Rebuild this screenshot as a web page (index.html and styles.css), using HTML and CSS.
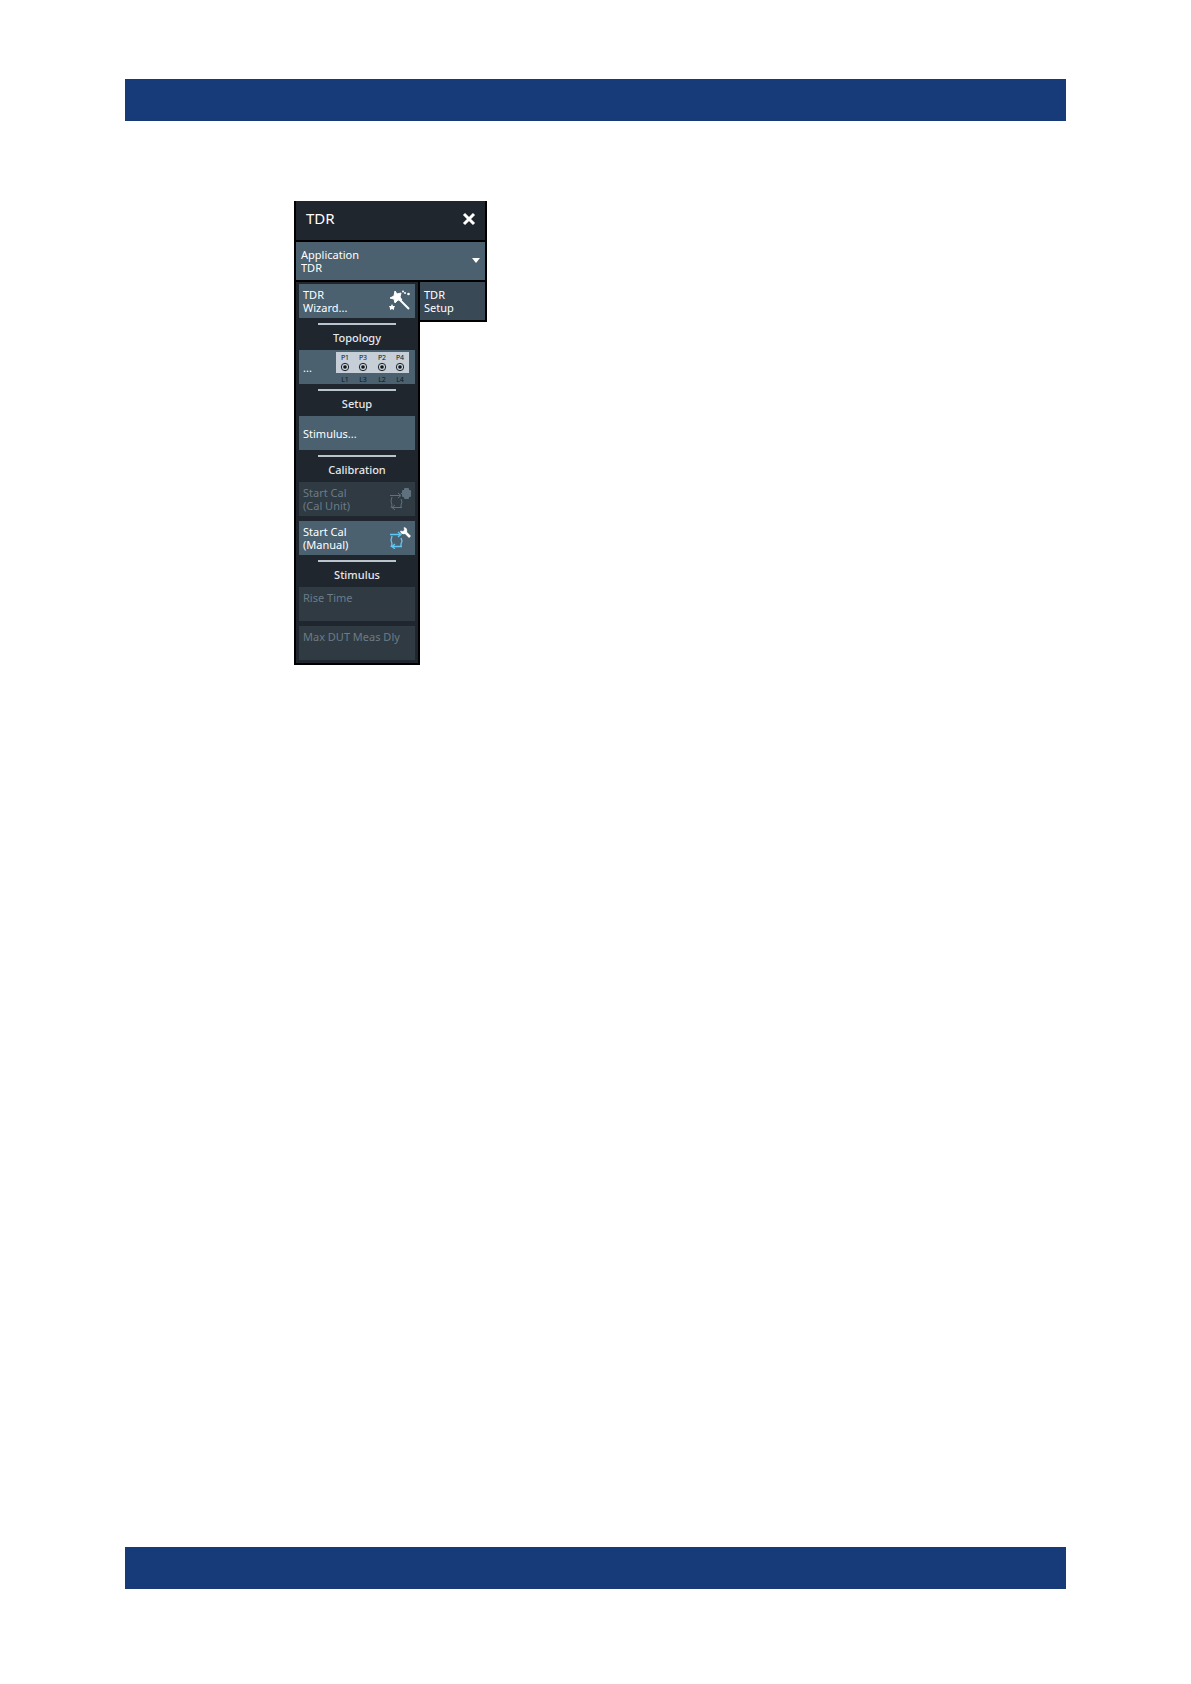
FILE: index.html
```html
<!DOCTYPE html>
<html lang="en">
<head>
    <meta charset="UTF-8">
    <meta name="viewport" content="width=device-width, initial-scale=1.0">
    <title>TDR Setup</title>
    <link rel="stylesheet" href="styles.css">
</head>

<body>
    <header class="bar"></header>

    <main class="softtool">
        <div class="title-row">
            <h1 class="title">TDR</h1>
            <button class="close" aria-label="Close">
                <svg width="14" height="14" viewBox="0 0 14 14"><path d="M2 2 L12 12 M12 2 L2 12" stroke="#fff" stroke-width="3" fill="none"/></svg>
            </button>
        </div>

        <div class="application">
            <label for="application">Application</label>
            <select id="application">
                <option>TDR</option>
            </select>
            <svg class="caret" width="8" height="5" viewBox="0 0 8 5"><path d="M0 0 H8 L4 5 Z" fill="#fff"/></svg>
        </div>

        <div class="columns">
            <div class="tools">
                <button class="tool">
                    <span>TDR<br>Wizard...</span>
                    <svg width="22" height="22" viewBox="0 0 22 22" fill="#fff">
                        <path d="M6 1 L8 4 L12 3 L11 7 L13 10 L9 10 L6 13 L5 9 L1 8 L5 6 Z" stroke="#fff" stroke-linejoin="round"/>
                        <path d="M10 9 L20 19" stroke="#fff" stroke-width="2"/>
                        <path d="M3 14 L4 16 L6 16 L5 18 L5 20 L3 19 L1 20 L1 18 L0 16 L2 16 Z"/>
                        <circle cx="14" cy="1.5" r="1"/>
                        <circle cx="16" cy="3" r="1"/>
                        <circle cx="19.5" cy="4" r="1.3"/>
                    </svg>
                </button>

                <h2 class="group">Topology</h2>
                <button class="tool tool-topology">
                    <span>...</span>
                    <svg width="73" height="31" viewBox="0 0 73 31">
                        <rect width="73" height="21" fill="#c6cfd7"/>
                        <g fill="none" stroke="#20262e">
                            <circle cx="9" cy="15" r="3.7"/>
                            <circle cx="27" cy="15" r="3.7"/>
                            <circle cx="46" cy="15" r="3.7"/>
                            <circle cx="64" cy="15" r="3.7"/>
                        </g>
                        <g fill="#10151a">
                            <circle cx="9" cy="15" r="1.8"/>
                            <circle cx="27" cy="15" r="1.8"/>
                            <circle cx="46" cy="15" r="1.8"/>
                            <circle cx="64" cy="15" r="1.8"/>
                        </g>
                        <g class="port-names">
                            <text x="9" y="8">P1</text>
                            <text x="27" y="8">P3</text>
                            <text x="46" y="8">P2</text>
                            <text x="64" y="8">P4</text>
                            <text x="9" y="30">L1</text>
                            <text x="27" y="30">L3</text>
                            <text x="46" y="30">L2</text>
                            <text x="64" y="30">L4</text>
                        </g>
                    </svg>
                </button>

                <h2 class="group">Setup</h2>
                <button class="tool">Stimulus...</button>

                <h2 class="group">Calibration</h2>
                <button class="tool" disabled>
                    <span>Start Cal<br>(Cal Unit)</span>
                    <svg width="22" height="22" viewBox="0 0 22 22" fill="none" stroke="#5f717d">
                        <path d="M1 7.5 H11 M9 5 L12 7.5 L9 10 M3 9 L2 13 L3 17 L2 20 M12 11 L13 14 L12 17 L12 20 M13 19.5 H3 M6 17 L3 19.5 L6 22"/>
                        <path d="M12 5.5 H15"/>
                        <rect x="15" y="0" width="5" height="11" rx="1" fill="#5f717d" stroke="none"/>
                        <rect x="13" y="2" width="9" height="7" rx="1" fill="#5f717d" stroke="none"/>
                    </svg>
                </button>
                <button class="tool">
                    <span>Start Cal<br>(Manual)</span>
                    <svg width="22" height="22" viewBox="0 0 22 22" fill="none" stroke="#62c6f2">
                        <path d="M1 7.5 H11 M9 5 L12 7.5 L9 10 M3 9 L2 13 L3 17 L2 20 M12 11 L13 14 L12 17 L12 20 M13 19.5 H3 M6 17 L3 19.5 L6 22" stroke-width="1.3"/>
                        <!-- wrench -->
                        <path d="M15 0.5 A3.2 3.2 0 1 1 11.5 4 L14 4.5 L15.5 3 Z" fill="#fff" stroke="#fff" stroke-width="0.6"/>
                        <path d="M16 5 L21 10" stroke="#fff" stroke-width="2.6"/>
                    </svg>
                </button>

                <h2 class="group">Stimulus</h2>
                <button class="tool tool-value" disabled>Rise Time</button>
                <button class="tool tool-value" disabled>Max DUT Meas Dly</button>
            </div>

            <button class="tab">TDR<br>Setup</button>
        </div>
    </main>

    <footer class="bar bar-bottom"></footer>
</body>
</html>
```

FILE: styles.css
```css
* {
    box-sizing: border-box;
}
body {
    display: flex;
    flex-direction: column;
    min-height: 100vh;
    margin: 0;
    padding: 79px 125px 95px;
    font-family: "Noto Sans", "Open Sans", sans-serif;
    font-size: 11px;
    line-height: 13px;
    color: white;
    background: white;
}
button, select {
    margin: 0;
    border: none;
    font: inherit;
    color: inherit;
    text-align: left;
}
.bar {
    height: 42px;
    background: #173a78;
}
.bar-bottom {
    margin-top: auto;
}

.softtool {
    width: 193px;
    margin: 80px 0 40px 169px;
}
.title-row {
    display: flex;
    justify-content: space-between;
    align-items: center;
    height: 41px;
    padding: 0 9px 4px 10px;
    border: 2px solid black;
    border-top: none;
    background: #20262e;
}
.title {
    margin: 0;
    font-size: 15px;
    font-weight: 400;
}
.close {
    display: flex;
    padding: 0;
    background: none;
}
.application {
    position: relative;
    display: flex;
    flex-direction: column;
    justify-content: center;
    height: 40px;
    padding: 0 0 1px 5px;
    border: 2px solid black;
    border-top: none;
    background: #4b6170;
}
.application select {
    width: 100%;
    padding: 0;
    appearance: none;
    background: none;
}
.caret {
    position: absolute;
    top: 16px;
    right: 5px;
    pointer-events: none;
}

.columns {
    display: flex;
    align-items: flex-start;
}
.tools {
    display: flex;
    flex-direction: column;
    width: 126px;
    padding: 2px 3px 3px;
    border: 2px solid black;
    border-top: none;
    background: #20262e;
}
.tool {
    display: flex;
    justify-content: space-between;
    align-items: center;
    height: 34px;
    padding: 0 4px;
    background: #4b6170;
}
.tool:disabled {
    color: #6b7c87;
    background: #2f3a43;
}
.tool + .tool {
    margin-top: 5px;
}
.tool-topology {
    padding-right: 6px;
}
.tool-value {
    align-items: flex-start;
    padding-top: 4px;
}
.port-names {
    font-size: 7px;
    text-anchor: middle;
    fill: #10151a;
}
.group {
    margin: 5px 0 0;
    font-size: 11px;
    font-weight: 500;
    line-height: 25px;
    text-align: center;
    color: #e4e8eb;
}
.group::before {
    content: "";
    display: block;
    width: 78px;
    height: 2px;
    margin: 0 auto;
    background: #b9c4cc;
}
.tab {
    flex: 1;
    height: 40px;
    padding: 0 4px;
    border-right: 2px solid black;
    border-bottom: 2px solid black;
    background: #3a4956;
}
```
